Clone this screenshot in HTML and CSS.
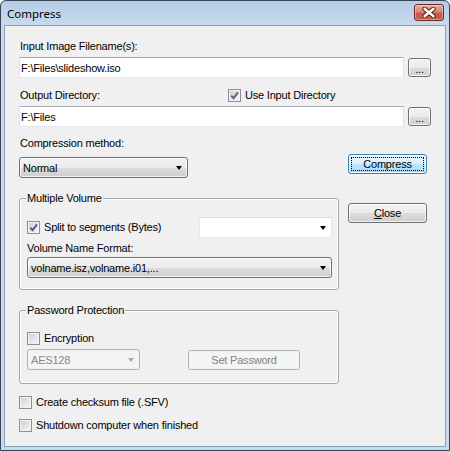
FILE: index.html
```html
<!DOCTYPE html>
<html lang="en">
<head>
<meta charset="utf-8">
<title>Compress</title>
<link rel="stylesheet" href="styles.css">
</head>
<body>
<div class="window">
  <div class="titlebar">
    <span class="title">Compress</span>
    <div class="close-x" role="button" aria-label="Close">
      <svg width="16" height="11" viewBox="0 0 16 11">
        <path d="M3.5 1.8 L12.5 9.2 M12.5 1.8 L3.5 9.2" stroke="#5a1f17" stroke-width="4.4" stroke-linecap="round"/>
        <path d="M3.5 1.8 L12.5 9.2 M12.5 1.8 L3.5 9.2" stroke="#ffffff" stroke-width="2.4" stroke-linecap="round"/>
      </svg>
    </div>
  </div>
  <div class="client">
    <div class="label">Input Image Filename(s):</div>
    <div class="path-row">
      <div class="textbox">F:\Files\slideshow.iso</div>
      <div class="btn browse">...</div>
    </div>
    <div class="dir-head">
      <div class="label">Output Directory:</div>
      <div class="check">
        <span class="box"><svg width="11" height="11" viewBox="0 0 11 11"><path d="M2.2 5.6 L4.6 8.2 L9 2.4" fill="none" stroke="#4e638f" stroke-width="2"/></svg></span>
        <span class="check-text">Use Input Directory</span>
      </div>
    </div>
    <div class="path-row">
      <div class="textbox">F:\Files</div>
      <div class="btn browse">...</div>
    </div>
    <div class="main">
      <div class="left">
        <div class="label">Compression method:</div>
        <div class="combo method"><span>Normal</span><span class="arrow"></span></div>
        <div class="group volume">
          <div class="legend">Multiple Volume</div>
          <div class="seg-row">
            <div class="check">
              <span class="box"><svg width="11" height="11" viewBox="0 0 11 11"><path d="M2.2 5.6 L4.6 8.2 L9 2.4" fill="none" stroke="#4e638f" stroke-width="2"/></svg></span>
              <span class="check-text">Split to segments (Bytes)</span>
            </div>
            <div class="edit-combo"><span class="arrow"></span></div>
          </div>
          <div class="label sub">Volume Name Format:</div>
          <div class="combo wide"><span>volname.isz,volname.i01,...</span><span class="arrow"></span></div>
        </div>
        <div class="group password">
          <div class="legend">Password Protection</div>
          <div class="check encrypt">
            <span class="box"></span>
            <span class="check-text">Encryption</span>
          </div>
          <div class="pw-row">
            <div class="combo disabled aes"><span>AES128</span><span class="arrow"></span></div>
            <div class="btn disabled setpw">Set Password</div>
          </div>
        </div>
        <div class="check opt first-opt">
          <span class="box"></span>
          <span class="check-text">Create checksum file (.SFV)</span>
        </div>
        <div class="check opt second-opt">
          <span class="box"></span>
          <span class="check-text">Shutdown computer when finished</span>
        </div>
      </div>
      <div class="right">
        <div class="btn default">Compress</div>
        <div class="btn close"><span><u>C</u>lose</span></div>
      </div>
    </div>
  </div>
</div>
</body>
</html>
```

FILE: styles.css
```css
html, body {
  margin: 0;
  padding: 0;
  background: #ffffff;
}

body {
  font-family: "Liberation Sans", Arial, sans-serif;
  font-size: 11px;
  letter-spacing: -0.2px;
  color: #000000;
}

.window {
  width: 450px;
  height: 451px;
  box-sizing: border-box;
  border: 1px solid #38444f;
  border-radius: 6px 6px 0 0;
  background: linear-gradient(180deg, #b7cde6 0px, #c8dbef 26px, #c6d9ee 100%);
  padding: 0 3px 3px;
  display: flex;
  flex-direction: column;
}

.titlebar {
  height: 24px;
  margin: 0 -3px;
  display: flex;
  justify-content: space-between;
  align-items: flex-start;
}

.title {
  font-family: "Noto Sans", "Open Sans", sans-serif;
  font-size: 11.5px;
  letter-spacing: 0;
  line-height: 23px;
  padding: 1px 0 0 6px;
  color: #000000;
}

.close-x {
  width: 30px;
  height: 17px;
  margin: 3px 5px 0 0;
  box-sizing: border-box;
  border: 1px solid #6b2a22;
  border-radius: 3px;
  background: linear-gradient(180deg, #e9a99c 0%, #d98473 48%, #c85a45 52%, #c0604c 100%);
  box-shadow: inset 0 0 0 1px rgba(255, 255, 255, 0.35);
  display: flex;
  align-items: center;
  justify-content: center;
}

.close-x svg {
  display: block;
}

.client {
  flex: 1;
  background: #f0f0f0;
  border: 1px solid #8aa0b8;
  padding: 14px 14px 0 14px;
}

.label {
  height: 13px;
  line-height: 13px;
  padding-left: 1px;
  white-space: nowrap;
}

.path-row {
  margin-top: 4px;
  height: 21px;
  display: flex;
  align-items: center;
  gap: 4px;
}

.textbox {
  width: 386px;
  height: 21px;
  box-sizing: border-box;
  background: #ffffff;
  border: 1px solid;
  border-color: #abadb3 #dbdfe6 #e3e9ef #e2e3ea;
  padding-left: 1px;
  display: flex;
  align-items: center;
  white-space: pre;
}

.btn {
  box-sizing: border-box;
  border: 1px solid #707070;
  border-radius: 3px;
  background: linear-gradient(180deg, #f2f2f2 0%, #ebebeb 50%, #dddddd 51%, #cfcfcf 100%);
  box-shadow: inset 0 0 0 1px rgba(255, 255, 255, 0.75);
  display: flex;
  align-items: center;
  justify-content: center;
  white-space: nowrap;
}

.browse {
  width: 23px;
  height: 19px;
  padding-top: 3px;
}

.dir-head {
  margin-top: 11px;
  display: grid;
  grid-template-columns: 209px auto;
  height: 13px;
}

.check {
  display: flex;
  align-items: center;
  height: 13px;
  line-height: 13px;
  white-space: nowrap;
}

.box {
  width: 13px;
  height: 13px;
  box-sizing: border-box;
  border: 1px solid #8e8f8f;
  background: linear-gradient(135deg, #c9cdd3 0%, #e4e6e9 55%, #f7f7f7 100%);
  box-shadow: inset 0 0 0 1px #f4f4f4;
  flex: none;
  display: flex;
  align-items: center;
  justify-content: center;
}

.box svg {
  display: block;
}

.check-text {
  margin-left: 4px;
}

.main {
  margin-top: 10px;
  display: grid;
  grid-template-columns: 320px 79px;
  column-gap: 9px;
}

.combo {
  box-sizing: border-box;
  height: 21px;
  border: 1px solid #707070;
  border-radius: 3px;
  background: linear-gradient(180deg, #f2f2f2 0%, #ebebeb 50%, #dddddd 51%, #cfcfcf 100%);
  box-shadow: inset 0 0 0 1px rgba(255, 255, 255, 0.75);
  display: flex;
  align-items: center;
  justify-content: space-between;
  padding: 0 5px 0 3px;
  white-space: nowrap;
}

.arrow {
  width: 0;
  height: 0;
  border-style: solid;
  border-width: 4px 3.5px 0 3.5px;
  border-color: #000000 transparent transparent transparent;
  margin-top: 1px;
}

.method {
  margin-top: 7px;
  width: 169px;
}

.group {
  box-sizing: border-box;
  border: 1px solid #a7a7a7;
  border-radius: 3px;
  box-shadow: inset 0 0 0 1px #ffffff;
  padding: 0 6px 0 7px;
}

.legend {
  display: table;
  height: 13px;
  line-height: 13px;
  margin: -7px 0 0 -1px;
  padding: 0 1px;
  background: #f0f0f0;
  white-space: nowrap;
}

.volume {
  margin-top: 20px;
  padding-bottom: 11px;
}

.seg-row {
  margin-top: 12px;
  height: 21px;
  display: flex;
  align-items: center;
  justify-content: space-between;
}

.edit-combo {
  width: 133px;
  height: 21px;
  box-sizing: border-box;
  background: #ffffff;
  border: 1px solid;
  border-color: #d7dbe2 #e3e9ef #e3e9ef #e3e9ef;
  display: flex;
  align-items: center;
  justify-content: flex-end;
  padding-right: 5px;
}

.sub {
  margin-top: 4px;
  padding-left: 0;
}

.wide {
  margin-top: 2px;
  width: 305px;
}

.password {
  margin-top: 20px;
  padding-bottom: 13px;
}

.encrypt {
  margin-top: 15px;
}

.pw-row {
  margin-top: 4px;
  display: flex;
  align-items: flex-start;
}

.combo.disabled {
  border-color: #adb2b5;
  background: #f4f4f4;
  box-shadow: none;
  color: #8a8a8a;
}

.combo.disabled .arrow {
  border-top-color: #a8a8a8;
}

.aes {
  width: 113px;
}

.btn.disabled {
  border-color: #adb2b5;
  background: #f4f4f4;
  box-shadow: none;
  color: #838383;
}

.setpw {
  width: 112px;
  height: 20px;
  margin: 1px 0 0 48px;
}

.first-opt {
  margin-top: 12px;
}

.second-opt {
  margin-top: 10px;
}

.right {
  display: flex;
  flex-direction: column;
}

.right .btn {
  height: 20px;
}

.btn.default {
  margin-top: 17px;
  border-color: #3c7fb1;
  background: linear-gradient(180deg, #eaf6fd 0%, #d9f0fc 50%, #bee6fd 51%, #a7d9f5 100%);
  position: relative;
}

.btn.default::after {
  content: "";
  position: absolute;
  inset: 2px;
  border: 1px dotted #000000;
}

.btn.close {
  margin-top: 29px;
}

.btn.close u {
  text-decoration: underline;
  text-underline-offset: 1px;
}
```
